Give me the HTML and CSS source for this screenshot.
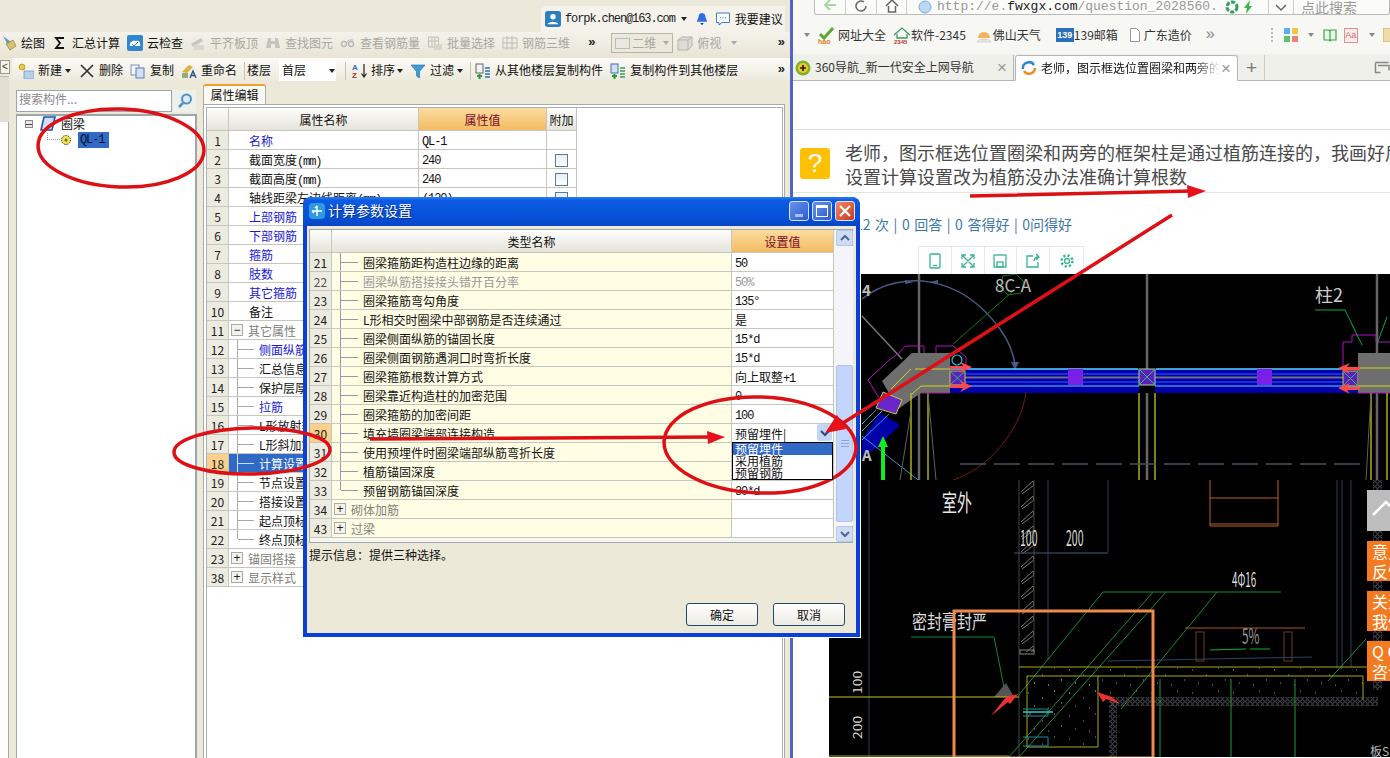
FILE: index.html
```html
<!DOCTYPE html>
<html lang="zh-CN">
<head>
<meta charset="utf-8">
<title>计算参数设置</title>
<link rel="stylesheet" href="styles.css">
</head>
<body>
<div class="screen">
  <div class="app">
    <div class="topbar">
      <div class="userchip">
        <svg class="ic16" viewBox="0 0 18 18"><rect width="18" height="18" rx="3" fill="#2b7fc0"/><circle cx="9" cy="6.500" r="3" fill="#fff"/><path d="M3 15c1-4 11-4 12 0z" fill="#fff"/></svg>
        <span class="lat email">forpk.chen@163.com</span>
        <span class="caret"></span>
        <svg class="ic14 bell" viewBox="0 0 16 16"><path d="M8 1c3 0 4 2.500 4 5l2 5H2l2-5c0-2.500 1-5 4-5z" fill="#2f6fe0"/><path d="M6 12.500h4L8 15z" fill="#17428f"/></svg>
        <svg class="ic16 chat" viewBox="0 0 16 16"><path d="M1.500 2h13v9.500H7L4 14v-2.500H1.500z" fill="#fff" stroke="#3d7cc9"/><path d="M5 6.800h1M7.500 6.800h1M10 6.800h1" stroke="#3d7cc9"/></svg>
        <span class="advice">我要建议</span>
      </div>
    </div>

    <div class="toolbar tb1">
      <span class="item"><svg class="ic16" viewBox="0 0 16 16"><path d="M2 1l8 6-3 3z" fill="#6d8fd0"/><path d="M5 9l7-4 3 6-6 4z" fill="#d5c270" stroke="#806f2e" stroke-width=".6"/></svg>绘图</span>
      <span class="item"><svg class="ic16" viewBox="0 0 16 16"><path d="M12 3H4l4 5-4 5h8" fill="none" stroke="#111" stroke-width="1.800"/></svg>汇总计算</span>
      <span class="item"><svg class="ic16" viewBox="0 0 16 16"><rect width="16" height="16" rx="2" fill="#2f87cf"/><path d="M3 11c-1-4 3-6 6-5 3-1 5 2 4 5z" fill="#fff"/><path d="M5 9l2 2 4-4" stroke="#2f87cf" fill="none"/></svg>云检查</span>
      <span class="item off"><svg class="ic16" viewBox="0 0 16 16"><path d="M1 9l10-6 2 3-10 6z" fill="#c8c8c0"/><rect x="4" y="10" width="10" height="5" fill="#d8d8d0"/></svg>平齐板顶</span>
      <span class="item off"><svg class="ic16" viewBox="0 0 16 16"><path d="M3 3h3v3h4V3h3l2 10h-5V9H6v4H1z" fill="#c4c4bc"/></svg>查找图元</span>
      <span class="item off"><svg class="ic16" viewBox="0 0 16 16"><circle cx="4" cy="9" r="2.500" fill="none" stroke="#bbb" stroke-width="1.500"/><circle cx="11" cy="9" r="2.500" fill="none" stroke="#bbb" stroke-width="1.500"/><path d="M6 8l3-3h4" stroke="#bbb" fill="none"/></svg>查看钢筋量</span>
      <span class="item off"><svg class="ic16" viewBox="0 0 16 16"><path d="M1.500 2h10v10h-10zM5 2v10M8 2v10M1.500 6h10" fill="none" stroke="#c0c0b8"/><rect x="7" y="9" width="8" height="6" fill="#d5d5cc"/></svg>批量选择</span>
      <span class="item off"><svg class="ic16" viewBox="0 0 16 16"><path d="M1 3h14v10H1zM5 1v14M10 1v14M1 8h14" fill="none" stroke="#bdbdb5"/></svg>钢筋三维</span>
      <span class="chev first">»</span>
      <span class="combo off"><i class="combo-ic"></i>二维<span class="caret light"></span></span>
      <span class="item off view"><svg class="ic16" viewBox="0 0 16 16"><path d="M1 5l4-3h10v9l-4 4H1z" fill="#dcdcd4" stroke="#b5b5ad"/><path d="M1 5h10v10M11 5l4-3" fill="none" stroke="#b5b5ad"/></svg>俯视<span class="caret light gap"></span></span>
      <span class="chev end">»</span>
    </div>

    <div class="toolbar tb2">
      <span class="item"><svg class="ic16" viewBox="0 0 16 16"><circle cx="4" cy="4" r="3" fill="#e8c840" stroke="#a08418" stroke-width=".6"/><rect x="6" y="8" width="10" height="8" fill="#b8d0ee" stroke="#5f84b8" stroke-width=".6"/></svg>新建<span class="caret"></span></span>
      <span class="item del"><svg class="ic16" viewBox="0 0 16 16"><path d="M2 2l12 12M14 2L2 14" stroke="#333" stroke-width="1.700"/></svg>删除</span>
      <span class="item"><svg class="ic16" viewBox="0 0 16 16"><rect x="1" y="2" width="8" height="10" fill="#f5f5f5" stroke="#7a8fb5"/><rect x="6" y="5" width="8" height="10" fill="#d2e0f4" stroke="#5f7fb4"/></svg>复制</span>
      <span class="item"><svg class="ic16" viewBox="0 0 16 16"><path d="M1 9l7-7 4 2-6 6z" fill="#d9b33c"/><rect x="1" y="10" width="6" height="5" fill="#8fae78"/><path d="M9 15l3-7 3 7M10 12.500h4" stroke="#25507f" fill="none" stroke-width="1.300"/></svg>重命名</span>
      <i class="vsep"></i>
      <span class="lbl">楼层</span>
      <span class="floor">首层<span class="caret"></span></span>
      <i class="vsep s2"></i>
      <span class="item sort"><svg class="ic16" viewBox="0 0 16 16"><text x="0" y="7" class="ictext az">A</text><text x="0" y="15" class="ictext zz">Z</text><path d="M12 1v12M9.500 10.500L12 14l2.500-3.500" stroke="#222" fill="none" stroke-width="1.200"/></svg>排序<span class="caret"></span></span>
      <span class="item"><svg class="ic16" viewBox="0 0 16 16"><path d="M1 2h14L9.500 8.500V15L6.500 13V8.500z" fill="#3f9ad8" stroke="#1c6ca8" stroke-width=".6"/></svg>过滤<span class="caret"></span></span>
      <i class="vsep s3"></i>
      <span class="item"><svg class="ic16" viewBox="0 0 16 16"><rect x="1" y="1" width="7" height="9" fill="#f2f2f2" stroke="#666"/><path d="M2 13h5M4.500 11v5" stroke="#2a9a3a" stroke-width="2"/><path d="M10 5h5M10 8h5M10 11h5M10 14h5" stroke="#2f6fb8" stroke-width="1.500"/></svg>从其他楼层复制构件</span>
      <span class="item"><svg class="ic16" viewBox="0 0 16 16"><rect x="1" y="1" width="7" height="9" fill="#d2e0f4" stroke="#4a6fa8"/><path d="M2 13h5M4.500 11v5" stroke="#2a9a3a" stroke-width="2"/><path d="M10 5h5M10 8h5M10 11h5M10 14h5" stroke="#3b9b6a" stroke-width="1.500"/></svg>复制构件到其他楼层</span>
      <span class="chev end">»</span>
    </div>

    <div class="workspace">
      <div class="rail"><span class="rail-btn">&lt;</span><i class="rail-a"></i><i class="rail-b"></i></div>
      <div class="side">
        <div class="search"><span class="search-input">搜索构件...</span><span class="search-btn"><svg class="ic16" viewBox="0 0 16 16"><circle cx="9.500" cy="6" r="4.500" fill="#dbeaf6" stroke="#4f93c6" stroke-width="2"/><path d="M6 10l-4 4" stroke="#4f93c6" stroke-width="2.500"/></svg></span></div>
        <div class="tree">
          <div class="tnode"><i class="minus"></i><svg class="ic16" viewBox="0 0 16 16"><path d="M4 1h11l-3 13H1z" fill="#cfe0f6" stroke="#1f54b0" stroke-width="1.600"/></svg><span>圈梁</span></div>
          <div class="tnode leaf"><i class="dots"></i><svg class="ic12" viewBox="0 0 12 12"><circle cx="6" cy="6" r="4.500" fill="#f3e34a" stroke="#333" stroke-dasharray="1.500 1"/><circle cx="6" cy="6" r="1.500" fill="#664"/></svg><span class="lat picked">QL-1</span></div>
        </div>
      </div>
      <div class="panel">
        <div class="tab">属性编辑</div>
        <div class="panel-body">
          <div class="grid-frame">
            <table class="grid main">
              <colgroup><col class="c-no"><col class="c-name"><col class="c-val"><col class="c-add"></colgroup>
              <tr class="head"><th></th><th>属性名称</th><th class="hot">属性值</th><th>附加</th></tr>
              <tr><td class="no">1</td><td class="nm link">名称</td><td class="val lat">QL-1</td><td></td></tr>
              <tr><td class="no">2</td><td class="nm">截面宽度<span class="lat">(mm)</span></td><td class="val lat">240</td><td class="chk"><i></i></td></tr>
              <tr><td class="no">3</td><td class="nm">截面高度<span class="lat">(mm)</span></td><td class="val lat">240</td><td class="chk"><i></i></td></tr>
              <tr><td class="no">4</td><td class="nm">轴线距梁左边线距离<span class="lat">(mm)</span></td><td class="val lat">(120)</td><td class="chk"><i></i></td></tr>
              <tr><td class="no">5</td><td class="nm link">上部钢筋</td><td></td><td></td></tr>
              <tr><td class="no">6</td><td class="nm link">下部钢筋</td><td></td><td></td></tr>
              <tr><td class="no">7</td><td class="nm link">箍筋</td><td></td><td></td></tr>
              <tr><td class="no">8</td><td class="nm link">肢数</td><td></td><td></td></tr>
              <tr><td class="no">9</td><td class="nm link">其它箍筋</td><td></td><td></td></tr>
              <tr><td class="no">10</td><td class="nm">备注</td><td></td><td></td></tr>
              <tr><td class="no">11</td><td class="grp"><i class="box">−</i>其它属性</td><td></td><td></td></tr>
              <tr><td class="no">12</td><td class="sub link">侧面纵筋</td><td></td><td></td></tr>
              <tr><td class="no">13</td><td class="sub">汇总信息</td><td></td><td></td></tr>
              <tr><td class="no">14</td><td class="sub">保护层厚度</td><td></td><td></td></tr>
              <tr><td class="no">15</td><td class="sub link">拉筋</td><td></td><td></td></tr>
              <tr><td class="no">16</td><td class="sub">L形放射箍筋</td><td></td><td></td></tr>
              <tr><td class="no">17</td><td class="sub">L形斜加筋</td><td></td><td></td></tr>
              <tr class="sel"><td class="no cur">18</td><td class="sub">计算设置</td><td></td><td></td></tr>
              <tr><td class="no">19</td><td class="sub">节点设置</td><td></td><td></td></tr>
              <tr><td class="no">20</td><td class="sub">搭接设置</td><td></td><td></td></tr>
              <tr><td class="no">21</td><td class="sub">起点顶标高</td><td></td><td></td></tr>
              <tr><td class="no">22</td><td class="sub last">终点顶标高</td><td></td><td></td></tr>
              <tr><td class="no">23</td><td class="grp"><i class="box">+</i>锚固搭接</td><td></td><td></td></tr>
              <tr><td class="no">38</td><td class="grp"><i class="box">+</i>显示样式</td><td></td><td></td></tr>
            </table>
          </div>
        </div>
      </div>
    </div>
  </div>

  <div class="browser">
    <div class="nav">
      <div class="nav-box">
        <span class="nav-cell w31"><svg class="ic16" viewBox="0 0 16 16"><path d="M14 7H4M8 2L3 7l5 5" fill="none" stroke="#a9d6a0" stroke-width="2"/></svg></span>
        <span class="nav-cell w31"><svg class="ic16" viewBox="0 0 16 16"><path d="M13 8a5 5 0 1 1-2-4" fill="none" stroke="#666" stroke-width="1.500"/></svg></span>
        <span class="nav-cell w30"><svg class="ic16" viewBox="0 0 16 16"><path d="M2 8l6-6 6 6M4.500 8v6h7V8" fill="none" stroke="#666" stroke-width="1.500"/></svg></span>
        <span class="url"><svg class="ic14" viewBox="0 0 14 14"><circle cx="7" cy="7" r="6" fill="#bcd9f2" stroke="#77aedb"/></svg><span class="url-text">http://e.<b>fwxgx.com</b>/question_2028560.</span><svg class="ic14" viewBox="0 0 14 14"><circle cx="7" cy="7" r="5" fill="none" stroke="#2f9e5f" stroke-width="3" stroke-dasharray="4 1.500"/></svg><svg class="ic14" viewBox="0 0 14 14"><path d="M9 0L3 8h3l-1 6 6-8H8z" fill="#39b54a"/></svg></span>
        <span class="nav-cell w25"><svg class="ic12" viewBox="0 0 12 12"><path d="M1 3l5 5 5-5" fill="none" stroke="#666" stroke-width="1.500"/></svg></span>
        <span class="searchbox">点此搜索</span>
      </div>
    </div>
    <div class="bookmarks">
      <span class="caret grey"></span>
      <span class="bm bm1"><svg class="ic18" viewBox="0 0 18 18"><path d="M2 8l4 4 9-10" fill="none" stroke="#5aaa30" stroke-width="3"/><text x="0" y="18" class="ictext hao">hao</text></svg>网址大全</span>
      <span class="bm bm2"><svg class="ic18" viewBox="0 0 18 18"><path d="M1 9l8-7 8 7M4 8v4h10V8" fill="none" stroke="#3a9a6a" stroke-width="1.300"/><text x="1" y="18" class="ictext n2345">2345</text></svg>软件-2345</span>
      <span class="bm bm3"><svg class="ic16" viewBox="0 0 16 16"><path d="M2 11a6 6 0 0 1 12 0z" fill="#f3b45a"/><path d="M1 15c2-4 12-4 14 0z" fill="#e6e6e6" stroke="#bbb" stroke-width=".5"/></svg>佛山天气</span>
      <span class="bm bm4"><span class="b139">139</span>139邮箱</span>
      <span class="bm bm5"><svg class="ic14" viewBox="0 0 14 14"><path d="M2.500.5h6l3 3v10h-9z" fill="#fff" stroke="#999"/></svg>广东造价</span>
      <span class="more">»</span>
      <i class="dotsep"></i>
      <svg class="ic14" viewBox="0 0 14 14"><rect width="6" height="6" fill="#5bb0ea"/><rect x="8" width="6" height="6" fill="#f3c740"/><rect y="8" width="6" height="6" fill="#5cc46c"/><rect x="8" y="8" width="6" height="6" fill="#ec7f7f"/></svg>
      <span class="caret grey c2"></span>
      <svg class="ic14 bk" viewBox="0 0 14 14"><path d="M1 2h5l1 1 1-1h5v10H8l-1 1-1-1H1zM7 3v10" fill="#e7f6e5" stroke="#3ca84a" stroke-width="1.200"/></svg>
      <span class="aa">Aa</span>
      <span class="caret grey c3"></span>
      <svg class="ic14 bx" viewBox="0 0 14 14"><rect width="14" height="14" fill="#f0dca8" stroke="#c9a860"/></svg>
    </div>
    <div class="tabs">
      <span class="btab"><svg class="ic16" viewBox="0 0 16 16"><circle cx="8" cy="8" r="7.500" fill="#7cb22c"/><circle cx="8" cy="8" r="5" fill="#f1c52d"/><path d="M8 5v6M5 8h6" stroke="#222" stroke-width="1.700"/></svg><span class="btab-t">360导航_新一代安全上网导航</span><span class="x">×</span></span>
      <span class="btab active"><svg class="ic16" viewBox="0 0 16 16"><path d="M2 9a6 6 0 0 1 11-4" fill="none" stroke="#2f87cf" stroke-width="2.500"/><path d="M14 8a6 6 0 0 1-11 3" fill="none" stroke="#f08a24" stroke-width="2.500"/></svg><span class="btab-t fade">老师，图示框选位置圈梁和两旁的框架柱</span><span class="x">×</span></span>
      <span class="plus">+</span>
      <svg class="ic16 winic" viewBox="0 0 16 16"><path d="M1.500 1.500h13M1.500 1.500v10h5M4 4.500h11v5" fill="none" stroke="#888" stroke-width="1.500"/></svg>
    </div>
    <div class="page">
      <div class="page-top"></div>
      <div class="question">
        <span class="qmark">?</span>
        <div class="qtext">老师，图示框选位置圈梁和两旁的框架柱是通过植筋连接的，我画好后发现<br>设置计算设置改为植筋没办法准确计算根数</div>
      </div>
      <div class="stats">12 次 | 0 回答 | 0 答得好 | 0问得好</div>
      <div class="imgtools">
        <span class="it"><svg class="ic16" viewBox="0 0 16 16"><rect x="3" y="1" width="10" height="14" rx="1" fill="none" stroke="#37b48f" stroke-width="1.300"/><path d="M6 12.500h4" stroke="#37b48f" stroke-width="1.300"/></svg></span>
        <span class="it"><svg class="ic16" viewBox="0 0 16 16"><path d="M2 6V2h4M14 6V2h-4M2 10v4h4M14 10v4h-4M3 3l10 10M13 3L3 13" fill="none" stroke="#37b48f" stroke-width="1.300"/></svg></span>
        <span class="it"><svg class="ic16" viewBox="0 0 16 16"><rect x="2" y="2" width="12" height="12" fill="none" stroke="#37b48f" stroke-width="1.300"/><rect x="5" y="9" width="6" height="5" fill="none" stroke="#37b48f" stroke-width="1.300"/></svg></span>
        <span class="it"><svg class="ic16" viewBox="0 0 16 16"><path d="M8 3H2v11h11V9M9 8c0-3 2-4 5-4M11 1l3 3-3 3" fill="none" stroke="#37b48f" stroke-width="1.300"/></svg></span>
        <span class="it"><svg class="ic16" viewBox="0 0 16 16"><circle cx="8" cy="8" r="2.500" fill="none" stroke="#37b48f" stroke-width="1.300"/><circle cx="8" cy="8" r="5.500" fill="none" stroke="#37b48f" stroke-width="2.400" stroke-dasharray="2.200 2.100"/></svg></span>
      </div>
      <svg class="cad" viewBox="829 275 561 483">
        <defs>
          <pattern id="speck" width="41" height="23" patternUnits="userSpaceOnUse"><path d="M3 4h1M17 9h1M29 2h1M36 14h1M9 17h1M23 19h1" stroke="#999"/></pattern>
          <pattern id="chain" width="5" height="5" patternUnits="userSpaceOnUse"><circle cx="2.500" cy="2.500" r="1.800" fill="none" stroke="#667" stroke-width=".8"/></pattern>
          <pattern id="zig" width="15" height="15" patternUnits="userSpaceOnUse"><path d="M1 13L13 2l1 4-12 9" fill="none" stroke="#7a7a6a"/></pattern>
        </defs>
        <rect x="829" y="275" width="561" height="483" fill="#000"/>
        <!-- upper drawing -->
        <path d="M919 275v206M1147 275v206M1377 275v206" stroke="#666" stroke-width="2.500"/>
        <path d="M862 317l40 43" stroke="#777" stroke-width="1.500"/>
        <path d="M862 300C900 270 960 275 1000 330c10 14 14 26 15 37" fill="none" stroke="#4a5a85" stroke-width="1.500"/>
        <path d="M905 281l9 2-9 2zM938 281l-9 2 9 2zM1011 363h8l-4 8z" fill="#4a5a85"/>
        <path d="M953 345l59-52" stroke="#0a7a20"/>
        <path d="M1003 277l13-2 8 8-3 11-13 2-8-8z" fill="none" stroke="#0a7a20"/>
        <path d="M905 347l-6 7-10 7-8 8-7 6-6 6 6 10 9 14M905 347h19v11h12v-11h17l13 11v12" fill="none" stroke="#b010c0"/>
        <rect x="950" y="370" width="409" height="24" fill="#0000a8"/>
        <path d="M950 370h188M1156 370h203" stroke="#55d8ff" stroke-width="1.500"/>
        <path d="M950 375h409M950 383h409" stroke="#2a60ff"/>
        <path d="M950 378.500h409" stroke="#707080" stroke-width="2"/>
        <path d="M950 387h409" stroke="#55d8ff"/>
        <rect x="1068" y="370" width="15" height="16" fill="#7a1fe8"/>
        <rect x="1257" y="370" width="15" height="16" fill="#7a1fe8"/>
        <rect x="1139" y="370" width="16" height="24" fill="#000"/>
        <rect x="1139" y="370" width="16" height="16" fill="#5e1fc0" stroke="#9ad8a0"/>
        <path d="M1139 370l16 16M1155 370l-16 16" stroke="#25c060"/>
        <path d="M882 382l30-28h38v40h-29l-23 16z" fill="#6e6e6e"/>
        <path d="M911 370l-20 20M915 370h35M921 387l-9 8M921 387h29" stroke="#d4d420" fill="none"/>
        <path d="M921 394l29 0" stroke="#a02090"/>
        <rect x="950" y="372" width="15" height="14" fill="#5e1fc0" stroke="#c0d030"/>
        <path d="M950 372l15 14M965 372l-15 14" stroke="#25c060"/>
        <rect x="1343" y="372" width="15" height="15" fill="#5e1fc0" stroke="#c0d030"/>
        <path d="M1343 372l15 15M1358 372l-15 15" stroke="#25c060"/>
        <path d="M1358 354h32v40h-32z" fill="#6e6e6e"/>
        <path d="M1343 370v-27h9v-7h24v7h14M1358 394h32" fill="none" stroke="#b010c0"/>
        <path d="M1343 369h47M1358 387h32" stroke="#d4d420"/>
        <circle cx="957" cy="361" r="5" fill="none" stroke="#22c0e0" stroke-width="1.200"/>
        <path d="M972 368l-12-5 3 4h-13v3h13l-3 4zM972 387l-12-5 3 4h-13v3h13l-3 4zM1338 369l12-5-3 4h13v3h-13l3 4zM1338 389l12-5-3 4h13v3h-13l3 4z" fill="#ff4848"/>
        <path d="M883 393l19 8-6 14-20-6z" fill="#6a26c8" stroke="#c0d030"/>
        <path d="M862 440l18-26 20 12-22 22-16 10z" fill="#0000a8"/>
        <path d="M862 425l14-14M862 432l20-20M862 441l27-26M862 437l60 47" stroke="#39bfff" stroke-width=".8"/>
        <path d="M911 394v87M928 394v87M1139 394v87M1155 394v87M1371 394v87M1387 394v87" stroke="#c8c820" stroke-width="1.300"/>
        <path d="M1371 394l-5 87M928 394l8 87M911 412l-11 69" stroke="#606060"/>
        <path d="M1026 393c-5 40-40 78-73 88" fill="none" stroke="#7a1a10"/>
        <path d="M960 465h406" stroke="#445060" stroke-width="1.500" stroke-dasharray="26 8"/>
        <path d="M883 481v-34" stroke="#11ee22" stroke-width="4"/>
        <path d="M883 437l-5 11h10z" fill="#11ee22"/>
        <path d="M1315 311h30l17 35M1377 345l10-27" fill="none" stroke="#0fa83a"/>
        <text x="995" y="293" class="cadt c1">8C-A</text>
        <text x="1315" y="303" class="cadt c2">柱2</text>
        <text x="862" y="297" class="cadt c3">4</text>
        <text x="862" y="462" class="cadt c3">A</text>
        <!-- lower drawing -->
        <rect x="829" y="481" width="561" height="277" fill="#000"/>
        <path d="M869 481v277M1048 481v180M1108 481v72M1337 481v187M1342 481v187M1351 481v187" stroke="#2f3f58"/>
        <rect x="1019" y="481" width="15" height="172" fill="url(#zig)"/>
        <path d="M1019 481v277M1034 481v172" stroke="#444"/>
        <rect x="1020" y="651" width="14" height="4" fill="none" stroke="#887"/>
        <rect x="1373" y="481" width="9" height="210" fill="url(#chain)"/>
        <path d="M1014 554h94" stroke="#4a5a78"/>
        <path d="M1210 481v46h68v-46M1210 499h68M1210 525h68" fill="none" stroke="#b8602a"/>
        <g transform="translate(942 512) scale(1 1.500)"><text class="cadt c4">室外</text></g>
        <g transform="translate(1020 547) scale(.75 1.500)"><text class="cadt c5">100</text></g>
        <g transform="translate(1066 547) scale(.75 1.500)"><text class="cadt c5">200</text></g>
        <g transform="translate(1232 588) scale(.7 1.400)"><text class="cadt c5">4Φ16</text></g>
        <g transform="translate(1242 645) scale(.85 1.500)"><text class="cadt c6">5%</text></g>
        <g transform="translate(912 630) scale(1 1.300)"><text class="cadt c7">密封膏封严</text></g>
        <path d="M1103 593h178" stroke="#1f8a30"/>
        <path d="M1103 593l-85 104M1153 593l-144 165M1166 593l-147 165M1217 593l-96 117M1366 640l-38 42" stroke="#1c8a30"/>
        <path d="M1185 629h120" stroke="#a85828"/>
        <rect x="1196" y="633" width="8" height="29" fill="none" stroke="#6a3a20"/>
        <rect x="1284" y="633" width="8" height="29" fill="none" stroke="#6a3a20"/>
        <path d="M1210 651l36-1M1250 650h20" stroke="#11b030"/>
        <path d="M1108 662l204-4" stroke="#2f4068"/>
        <path d="M911 638h83l11 55" fill="none" stroke="#0f8a30"/>
        <path d="M994 698l12-14 8 14z" fill="#555"/>
        <path d="M829 698h190" stroke="#c8c820"/>
        <path d="M1019 668h349M1027 677h336v24M1027 677v71h71v-71M829 757h180" fill="none" stroke="#a8a820"/>
        <rect x="1030" y="669" width="335" height="28" fill="url(#speck)"/>
        <rect x="1028" y="678" width="69" height="69" fill="url(#speck)"/>
        <rect x="1110" y="698" width="268" height="9" fill="url(#chain)"/>
        <rect x="1109" y="702" width="8" height="56" fill="url(#chain)"/>
        <path d="M1160 680v78M1231 680v78M1295 680v78" stroke="#1f9a35"/>
        <path d="M1023 710h25v7h-25M1030 716v-3M1023 738h25v9h-25" fill="none" stroke="#1d8fa8"/>
        <path d="M1023 713h30" stroke="#2ad0c0" stroke-width="1.500"/>
        <g transform="translate(862 695) rotate(-90) scale(1 .8)"><text class="cadt c5">100</text></g>
        <g transform="translate(862 740) rotate(-90) scale(1 .8)"><text class="cadt c5">200</text></g>
        <text x="1370" y="757" class="cadt c8">板S</text>
        <rect x="954" y="612" width="199" height="147" fill="none" stroke="#f0894a" stroke-width="3"/>
        <path d="M1018 695l-12 3-15 19 17-14 2 2zM1097 693l15 5 8 7-14-5-3 3z" fill="#f03030"/>
      </svg>
    </div>
  </div>

  <div class="dialog">
    <div class="titlebar">
      <svg class="ic16" viewBox="0 0 16 16"><rect width="16" height="16" rx="4" fill="#2f9ae0"/><path d="M8 3v10M3 8h10M8 3L6 5M3 8l2 2" stroke="#fff" stroke-width="1.500" fill="none"/></svg>
      <span class="title">计算参数设置</span>
      <span class="wbtn"><i class="wmin"></i></span>
      <span class="wbtn"><i class="wmax"></i></span>
      <span class="wbtn close"><svg class="ic12" viewBox="0 0 12 12"><path d="M1 1l10 10M11 1L1 11" stroke="#fff" stroke-width="2.200"/></svg></span>
    </div>
    <div class="client">
      <div class="dlg-frame">
        <table class="grid dlg">
          <colgroup><col class="d-no"><col class="d-name"><col class="d-val"></colgroup>
          <tr class="head"><th></th><th>类型名称</th><th class="hot">设置值</th></tr>
          <tr><td class="no">21</td><td class="nm2">圈梁箍筋距构造柱边缘的距离</td><td class="val lat">50</td></tr>
          <tr class="dim"><td class="no">22</td><td class="nm2">圈梁纵筋搭接接头错开百分率</td><td class="val lat">50%</td></tr>
          <tr><td class="no">23</td><td class="nm2">圈梁箍筋弯勾角度</td><td class="val lat">135°</td></tr>
          <tr><td class="no">24</td><td class="nm2">L形相交时圈梁中部钢筋是否连续通过</td><td class="val">是</td></tr>
          <tr><td class="no">25</td><td class="nm2">圈梁侧面纵筋的锚固长度</td><td class="val lat">15*d</td></tr>
          <tr><td class="no">26</td><td class="nm2">圈梁侧面钢筋遇洞口时弯折长度</td><td class="val lat">15*d</td></tr>
          <tr><td class="no">27</td><td class="nm2">圈梁箍筋根数计算方式</td><td class="val">向上取整<span class="lat">+1</span></td></tr>
          <tr><td class="no">28</td><td class="nm2">圈梁靠近构造柱的加密范围</td><td class="val lat">0</td></tr>
          <tr><td class="no">29</td><td class="nm2">圈梁箍筋的加密间距</td><td class="val lat">100</td></tr>
          <tr><td class="no cur">30</td><td class="nm2">填充墙圈梁端部连接构造</td>
            <td class="val editing">预留埋件|<span class="dropbtn"><svg class="ic12" viewBox="0 0 12 12"><path d="M2 4l4 4 4-4" fill="none" stroke="#2a4a8a" stroke-width="2"/></svg></span>
              <div class="droplist"><div class="opt on">预留埋件</div><div class="opt">采用植筋</div><div class="opt">预留钢筋</div></div>
            </td></tr>
          <tr><td class="no">31</td><td class="nm2">使用预埋件时圈梁端部纵筋弯折长度</td><td class="val lat">15*d</td></tr>
          <tr><td class="no">32</td><td class="nm2">植筋锚固深度</td><td class="val lat">30*d</td></tr>
          <tr><td class="no">33</td><td class="nm2 last">预留钢筋锚固深度</td><td class="val lat">30*d</td></tr>
          <tr><td class="no">34</td><td class="grp2"><i class="box">+</i>砌体加筋</td><td></td></tr>
          <tr><td class="no">43</td><td class="grp2"><i class="box">+</i>过梁</td><td></td></tr>
        </table>
        <div class="scroll">
          <span class="sbtn"><svg class="ic12" viewBox="0 0 12 12"><path d="M2 8l4-4 4 4" fill="none" stroke="#4a6a9a" stroke-width="2"/></svg></span>
          <div class="track"><div class="thumb"><i></i></div></div>
          <span class="sbtn"><svg class="ic12" viewBox="0 0 12 12"><path d="M2 4l4 4 4-4" fill="none" stroke="#4a6a9a" stroke-width="2"/></svg></span>
        </div>
      </div>
      <div class="hint">提示信息：提供三种选择。</div>
      <div class="actions"><button class="btn">确定</button><button class="btn">取消</button></div>
    </div>
  </div>

  <div class="floats">
    <div class="fl top"><svg class="ic23" viewBox="0 0 23 41"><path d="M6 25L19 12l4 4" fill="none" stroke="#fff" stroke-width="2.500"/></svg></div>
    <div class="fl">意见<br>反馈</div>
    <div class="fl">关注<br>我们</div>
    <div class="fl">Q Q<br>咨询</div>
  </div>

  <svg class="marks" viewBox="0 0 1390 758">
    <ellipse cx="121" cy="148" rx="83" ry="39" transform="rotate(2 121 148)"/>
    <ellipse cx="252" cy="451" rx="78" ry="23" transform="rotate(-1 252 451)"/>
    <ellipse cx="760" cy="445" rx="96" ry="48" transform="rotate(2 760 445)"/>
    <path d="M370 439L712 437M970 196L1192 191M1172 215L843 423"/>
    <polygon points="725,437 707,431 708,444"/>
    <polygon points="1206,191 1187,185 1188,198"/>
    <polygon points="825,433 837,415 846,429"/>
  </svg>
</div>
</body>
</html>
```
FILE: styles.css
```css
* { box-sizing: border-box; }
html, body { margin: 0; padding: 0; }
body {
  font: 12px/1.2 "Noto Sans CJK SC", "Liberation Sans", sans-serif;
  color: #111;
  background: #fff;
}
i { font-style: normal; display: block; }
.screen { position: relative; width: 1390px; height: 758px; overflow: hidden; display: flex; }
.ic12 { width: 12px; height: 12px; flex: none; display: block; }
.ic14 { width: 14px; height: 14px; flex: none; display: block; }
.ic16 { width: 16px; height: 16px; flex: none; display: block; }
.ic18 { width: 18px; height: 18px; flex: none; display: block; }
.ic23 { width: 23px; height: 41px; display: block; }
.ictext { font: bold 8px "Liberation Sans", sans-serif; }
.az { fill: #2f6fb8; } .zz { fill: #b03030; }
.hao { font-size: 7px; fill: #e07a20; }
.n2345 { font-size: 6px; fill: #c03030; }
.lat { font-family: "Liberation Mono", "Noto Sans CJK SC", monospace; font-size: 12px; letter-spacing: -1.1px; }

/* left application */
.app { width: 790px; flex: none; display: flex; flex-direction: column; background: #ece9d8; }
.topbar { height: 32px; display: flex; justify-content: flex-end; padding: 6px 5px 0 0; background: #ece8da; }
.userchip { width: 244px; height: 26px; background: #f4f2ea; border-radius: 5px 0 0 0; display: flex; align-items: center; padding: 0 0 0 4px; white-space: nowrap; }
.email { margin-left: 4px; color: #222; flex: none; }
.bell { margin-left: 8px; }
.chat { margin-left: 6px; margin-right: 4px; }
.advice { flex: none; }
.userchip .caret { margin-left: 6px; }
.caret { display: inline-block; width: 0; height: 0; border: 3px solid transparent; border-top: 4px solid #222; border-bottom: 0; margin-left: 4px; flex: none; }
.caret.light { border-top-color: #aaa; }
.caret.grey { border-top-color: #888; }
.toolbar { display: flex; align-items: center; gap: 7px; }
.tb1 { height: 26px; padding: 0 0 4px 1px; background: linear-gradient(#f4f2ea, #e8e5d6); }
.tb2 { height: 25px; margin-left: 12px; padding-left: 6px; background: linear-gradient(#fbfaf5, #ebe8da); }
.item { display: flex; align-items: center; gap: 4px; white-space: nowrap; flex: none; }
.item .caret { margin-left: -1px; }
.off { color: #a8a8a0; }
.chev { font: bold 13px "Liberation Sans", sans-serif; color: #222; margin-top: -4px; flex: none; }
.chev.first { margin-left: 11px; }
.chev.end { margin-left: auto; margin-right: 5px; }
.combo { width: 62px; height: 20px; margin-left: 9px; border: 1px solid #b5b5a8; display: flex; align-items: center; gap: 2px; padding-left: 3px; background: #ece9dc; flex: none; }
.combo-ic { width: 15px; height: 11px; border: 1px solid #bbb; background: #e8e8e0; }
.combo .caret { margin-left: 5px; }
.view { margin-left: -3px; }
.view .gap { margin-left: 6px; }
.del { margin-left: 1px; }
.vsep { width: 1px; height: 18px; background: #c8c5b5; flex: none; }
.lbl { margin-left: -5px; flex: none; }
.floor { width: 57px; height: 21px; margin-left: 1px; background: #fff; display: flex; align-items: center; justify-content: space-between; padding: 0 0 0 3px; flex: none; }
.floor .caret { margin-right: 1px; }
.s2 { margin-left: 2px; margin-right: -1px; }
.sort { gap: 3px; }
.s3 { margin-right: -3px; }

.workspace { flex: 1; min-height: 0; display: flex; }
.rail { width: 12px; flex: none; display: flex; flex-direction: column; margin-top: -23px; }
.rail-btn { width: 10px; height: 14px; border: 1px solid #9a9a90; font: 10px/12px "Liberation Sans", sans-serif; color: #333; background: #f4f2ea; text-align: center; flex: none; }
.rail-a { height: 46px; margin-top: 2px; width: 9px; background: #e2dfd2; border-top: 1px solid #bbb; flex: none; }
.rail-b { flex: 1; width: 9px; background: #fff; border-right: 1px solid #aaa; }
.side { width: 188px; flex: none; padding: 7px 3px 0 4px; display: flex; flex-direction: column; gap: 2px; }
.search { height: 22px; display: flex; gap: 1px; width: 180px; flex: none; }
.search-input { width: 156px; background: #fff; border: 1px solid #9aa6b0; color: #888; line-height: 15px; padding-left: 2px; font-size: 12px; }
.search-btn { width: 23px; display: flex; align-items: center; justify-content: center; background: #eef0ec; }
.tree { flex: 1; width: 181px; background: #fff; border: 1px solid #9aa6b0; border-width: 2px 2px 0 1px; }
.tnode { height: 16px; display: flex; align-items: center; padding-left: 8px; }
.minus { width: 8px; height: 8px; background: linear-gradient(#444,#444) center/6px 1px no-repeat, #e8e8e8; border: 1px solid #888; margin-right: 7px; }
.tnode span { margin-left: 5px; }
.leaf { padding-left: 30px; }
.dots { width: 13px; height: 7px; border-left: 1px dotted #999; border-bottom: 1px dotted #999; margin: -7px 0 0 0; }
.picked { background: #316ac5; color: #001030; height: 16px; width: 31px; line-height: 16px; padding-left: 2px; margin-left: 6px !important; }

.panel { width: 582px; flex: none; margin-left: 3px; display: flex; flex-direction: column; min-height: 0; padding-top: 1px; }
.tab { width: 63px; height: 20px; background: #fbfaf5; border: 1px solid #aaa; border-top: 2px solid #f0a030; border-bottom: 0; border-radius: 3px 3px 0 0; line-height: 18px; text-align: center; flex: none; }
.panel-body { flex: 1; min-height: 0; background: #fff; border: 1px solid #aaa; border-bottom: 0; padding: 2px 0 0 2px; }
.grid-frame { height: 100%; border: 1px solid #a6b0b8; border-bottom: 0; margin-right: 1px; overflow: hidden; }

/* grids */
.grid { border-collapse: separate; border-spacing: 0; table-layout: fixed; background: #fff; }
.main { width: 370px; }
.c-no { width: 22px; } .c-name { width: 190px; } .c-val { width: 128px; } .c-add { width: 30px; }
.grid th, .grid td { box-sizing: border-box; padding: 1px 0 0; border-right: 1px solid #c6c6be; border-bottom: 1px solid #c6c6be; height: 19px; font-weight: 400; line-height: 17px; white-space: nowrap; overflow: hidden; }
.grid span.lat { line-height: 1; }
.grid td.val.lat { padding-top: 5px; line-height: 13px; }
.grid .head th { height: 23px; line-height: 21px; background: linear-gradient(#fdfdfb, #e6e4da); text-align: center; }
.grid .head th.hot { background: linear-gradient(#fbdca0, #f3bb62); color: #7a0a2a; }
.no { background: #ecebe0; text-align: center; color: #222; }
.grid td.cur { background: #fbd08c; }
.nm { padding-left: 20px !important; }
.link { color: #1a1ad0; }
.val { padding-left: 3px !important; }
.chk i { width: 13px; height: 13px; border: 1px solid #5a7a9a; background: linear-gradient(#e8eef4, #fff); margin: 1px auto 0; }
.box { display: inline-block; width: 12px; height: 12px; border: 1px solid #aaa; background: #f4f4ee; text-align: center; line-height: 10px; color: #222; margin: 2px 5px 0 0; vertical-align: top; font-size: 12px; font-family: "Liberation Sans", sans-serif; }
.grp, .grp2 { color: #808078; }
.grp { padding-left: 2px !important; }
.grp2 { padding-left: 2px !important; background: #fffde4; }
.sub { padding-left: 30px !important; background: linear-gradient(#aaa,#aaa) 8px 0/1px 100% no-repeat, linear-gradient(#aaa,#aaa) 9px 50%/16px 1px no-repeat; }
.sub.last { background: linear-gradient(#aaa,#aaa) 8px 0/1px 50% no-repeat, linear-gradient(#aaa,#aaa) 9px 50%/16px 1px no-repeat; }
.sel .sub, .sel td:nth-child(n+3) { background: linear-gradient(#cde,#cde) 8px 0/1px 100% no-repeat, linear-gradient(#cde,#cde) 9px 50%/16px 1px no-repeat, #316ac5; color: #fff; }
.nm2 { padding-left: 31px !important; background: linear-gradient(#99a,#99a) 8px 0/1px 100% no-repeat, linear-gradient(#99a,#99a) 9px 50%/17px 1px no-repeat, #fffde4; }
.nm2.last { background: linear-gradient(#99a,#99a) 8px 0/1px 50% no-repeat, linear-gradient(#99a,#99a) 9px 50%/17px 1px no-repeat, #fffde4; }
.dim { color: #999; }
.dim .no { color: #555; }
.dlg { width: 524px; flex: none; align-self: flex-start; }
.d-no { width: 22px; } .d-name { width: 400px; } .d-val { width: 102px; }

/* dialog */
.dialog { position: absolute; left: 303px; top: 197px; width: 557px; height: 440px; display: flex; flex-direction: column; border-radius: 8px 8px 0 0; background: #0a3fd8; padding: 0 4px 4px; box-shadow: 1px 1px 0 #fff; }
.titlebar { height: 29px; flex: none; margin: 0 -4px; padding: 0 5px 2px 6px; display: flex; align-items: center; gap: 3px; border-radius: 8px 8px 0 0; background: linear-gradient(#2a7ef0 0, #0b5be2 12%, #0650d8 70%, #0546c4 100%); }
.title { flex: 1; color: #fff; font-size: 14px; text-shadow: 1px 1px 1px #0a2a80; }
.wbtn { width: 20px; height: 20px; border: 1px solid #d8e4ff; border-radius: 3px; background: linear-gradient(135deg, #6a92ea, #2a5ad0); display: flex; align-items: center; justify-content: center; }
.wmin { width: 8px; height: 3px; background: #a8c0f0; margin-top: 9px; }
.wmax { width: 12px; height: 12px; border: 1.500px solid #fff; border-top-width: 3px; }
.close { background: linear-gradient(135deg, #f08a6a, #c8381c); }
.client { flex: 1; min-height: 0; background: #ece9d8; padding: 3px 3px 7px 2px; display: flex; flex-direction: column; }
.dlg-frame { height: 314px; flex: none; border: 1px solid #a0a8b0; display: flex; background: #f6f6f0; }
.editing { position: relative; }
.grid tr td.editing { overflow: visible; }
.dropbtn { position: absolute; right: 1px; top: 0; width: 15px; height: 17px; background: #c3d6f5; border-radius: 2px; display: flex; align-items: center; justify-content: center; }
.droplist { position: absolute; left: 0; top: 18px; width: 101px; height: 38px; background: #fff; border: 1px solid #000; z-index: 2; }
.opt { height: 12px; line-height: 12px; padding-left: 2px; overflow: visible; }
.opt.on { background: #316ac5; color: #fff; }
.scroll { width: 17px; margin-left: 2px; display: flex; flex-direction: column; flex: none; }
.sbtn { height: 16px; background: #d0dcf6; border: 1px solid #b8c8e8; border-radius: 2px; display: flex; align-items: center; justify-content: center; flex: none; }
.track { flex: 1; padding-top: 119px; background: #f4f4fa; }
.thumb { height: 157px; background: #c4d5fb; border: 1px solid #b0c4ee; border-radius: 2px; display: flex; align-items: center; justify-content: center; }
.thumb i { width: 8px; height: 7px; background: repeating-linear-gradient(#8aa6de 0 1px, transparent 1px 3px); }
.hint { flex: 1; padding-top: 3px; line-height: 16px; margin-top: 1px; }
.actions { display: flex; justify-content: flex-end; gap: 15px; padding-right: 8px; flex: none; }
.btn { width: 72px; height: 23px; padding: 0; border: 1px solid #1f4a70; border-radius: 3px; background: linear-gradient(#fff, #eceae2); font: 12px "Noto Sans CJK SC", sans-serif; color: #111; }

/* browser */
.browser { flex: 1; min-width: 0; display: flex; flex-direction: column; border-left: 3px solid #5464c0; background: #fff; }
.nav { height: 16px; flex: none; padding-left: 21px; background: #f7f7f3; }
.nav-box { height: 15px; display: flex; align-items: flex-end; border: 1px solid #bbb; border-top: 0; border-radius: 0 0 3px 3px; background: #fbfbf9; overflow: hidden; }
.nav-cell { height: 100%; display: flex; align-items: flex-end; justify-content: center; border-right: 1px solid #ccc; flex: none; }
.w31 { width: 31px; } .w30 { width: 30px; } .w25 { width: 25px; }
.url { flex: 1; min-width: 0; height: 100%; display: flex; align-items: flex-end; padding-left: 11px; border-right: 1px solid #ccc; gap: 2px; overflow: hidden; }
.url-text { font: 13px/14px "Liberation Mono", monospace; color: #999; margin: -3px 5px 0 3px; white-space: nowrap; }
.url-text b { color: #222; font-weight: 400; }
.searchbox { width: 95px; padding-left: 7px; color: #999; font-size: 14px; line-height: 14px; flex: none; white-space: nowrap; }
.bookmarks { height: 38px; flex: none; display: flex; align-items: center; padding-left: 7px; background: #f7f7f3; white-space: nowrap; color: #333; }
.bm { display: flex; align-items: center; flex: none; }
.bm1 { margin-left: 8px; } .bm1 .ic18 { margin-right: 2px; }
.bm2 { margin-left: 7px; }
.bm3 { margin-left: 10px; } .bm3 .ic16 { margin-right: 1px; }
.bm4 { margin-left: 15px; }
.b139 { font: bold 9px/14px "Liberation Sans", sans-serif; color: #fff; background: #2a70b8; width: 18px; text-align: center; }
.bm5 { margin-left: 10px; } .bm5 .ic14 { margin-right: 2px; }
.more { margin-left: 14px; font: 16px "Liberation Sans", sans-serif; color: #888; margin-top: -3px; }
.dotsep { width: 2px; height: 14px; margin-left: 56px; margin-right: 11px; background: repeating-linear-gradient(#bbb 0 2px, transparent 2px 4px); flex: none; }
.caret.c2 { margin-left: 10px; }
.bk { margin-left: 9px; }
.aa { width: 14px; height: 15px; border: 1px solid #e09090; background: #fbeaea; color: #d07070; font: 9px/13px "Liberation Sans", sans-serif; text-align: center; margin-left: 7px; flex: none; }
.caret.c3 { margin-left: 11px; }
.bx { margin-left: 8px; }
.tabs { height: 27px; flex: none; display: flex; align-items: flex-end; gap: 1px; background: #f0f0ea; border-bottom: 1px solid #b5b5b5; }
.btab { width: 221px; height: 26px; display: flex; align-items: center; padding: 0 6px 0 2px; flex: none; white-space: nowrap; overflow: hidden; color: #333; margin-bottom: -1px; }
.btab:first-child { border-right: 1px solid #b5b5b5; border-bottom: 1px solid #b5b5b5; }
.btab-t { margin-left: 4px; flex: 1; overflow: hidden; }
.btab .x { font: 17px/1 "Liberation Sans", sans-serif; color: #999; flex: none; }
.btab.active { width: 223px; padding-left: 5px; background: #fff; border: 1px solid #b5b5b5; border-bottom: 1px solid #fff; border-radius: 3px 3px 0 0; color: #111; }
.fade { color: #111; -webkit-mask-image: linear-gradient(90deg, #000 85%, transparent); mask-image: linear-gradient(90deg, #000 85%, transparent); }
.plus { width: 26px; height: 25px; font: 19px/25px "Liberation Sans", sans-serif; color: #777; text-align: center; border-right: 1px solid #ccc; flex: none; }
.winic { margin-left: auto; margin-bottom: 3px; }
.page { flex: 1; min-height: 0; background: #fff; overflow: hidden; }
.page-top { height: 49px; border-bottom: 1px solid #ddd; }
.question { height: 63px; border-bottom: 1px solid #e4e4e4; display: flex; padding: 10px 0 0 7px; overflow: hidden; }
.qmark { width: 30px; height: 31px; margin-top: 8px; background: #fdc102; border-radius: 3px; color: #fff; font: 26px/31px "Liberation Sans", sans-serif; text-align: center; flex: none; }
.qtext { margin-left: 15px; font-size: 18px; line-height: 24px; color: #4a4a4a; white-space: nowrap; }
.stats { height: 53px; padding: 22px 0 0 62px; font-size: 14px; line-height: 18px; color: #3d78a8; white-space: nowrap; word-spacing: 1.400px; }
.imgtools { width: 166px; height: 28px; margin-left: 125px; display: flex; border: 1px solid #e8e8e8; border-bottom: 0; }
.it { width: 33px; display: flex; align-items: center; justify-content: center; border-right: 1px solid #e8e8e8; }
.it:last-child { border-right: 0; }
.cad { display: block; width: 561px; height: 483px; margin-left: 36px; }
.cadt { fill: #ddd; font-family: "Noto Sans CJK SC", sans-serif; }
.c1 { font-size: 17px; fill: #bbb; }
.c2 { font-size: 18px; fill: #ccc; }
.c3 { font-size: 15px; font-weight: 700; fill: #bbb; }
.c4 { font-size: 15px; fill: #e8e8e8; }
.c5 { font-size: 14px; fill: #ddd; }
.c6 { font-size: 14px; fill: #999; }
.c7 { font-size: 15px; fill: #ddd; }
.c8 { font-size: 12px; fill: #bbb; }

/* floating */
.floats { position: absolute; right: 0; top: 490px; width: 23px; display: flex; flex-direction: column; gap: 10px; }
.fl { width: 23px; height: 40px; background: #f47a20; color: #fff; font-size: 16px; line-height: 20px; padding-left: 5px; overflow: hidden; white-space: nowrap; }
.fl.top { height: 41px; padding: 0; background: #bdbdbd; }

/* annotation ink */
.marks { position: absolute; left: 0; top: 0; width: 1390px; height: 758px; pointer-events: none; }
.marks ellipse, .marks path { fill: none; stroke: #dd1016; stroke-width: 3.500; }
.marks polygon { fill: #e8101a; }
```
